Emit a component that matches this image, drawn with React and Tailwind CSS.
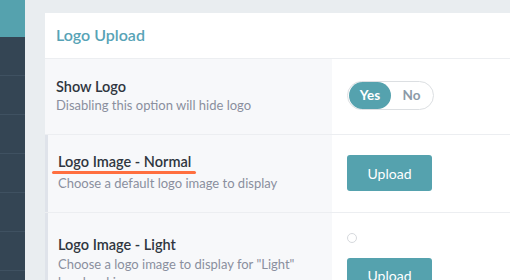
import React from 'react'

const font = { fontFamily: 'Lato, "Open Sans", sans-serif' }

export default function App() {
    return (
        <div className="flex w-[510px] h-[280px] overflow-hidden bg-[#e9edf0]" style={font}>
            {/* Sidebar */}
            <div className="w-[25px] shrink-0 flex flex-col bg-[#344554]">
                <div className="h-[37px] bg-[#55a2ae]" />
                {[0, 1, 2, 3, 4, 5].map(i => (
                    <div key={i} className="h-[39px] border-b border-[#3f5161]" />
                ))}
            </div>

            {/* Card */}
            <div className="ml-[20px] mt-[13px] w-[600px] shrink-0 bg-white">
                <div className="h-[46px] flex items-center px-[11px] pb-[1px] border-b border-[#eceef1]">
                    <h2 className="text-[16px] font-semibold text-[#57a3b6]">Logo Upload</h2>
                </div>

                {/* Show Logo */}
                <div className="flex h-[76px] border-b border-[#eceef1]">
                    <div className="w-[287px] shrink-0 bg-[#f7f8fa] flex flex-col justify-center px-[11px] pb-[4px]">
                        <p className="text-[14.5px] leading-[20px] font-semibold text-[#2f3640]">Show Logo</p>
                        <p className="text-[13px] leading-[16px] text-[#8a8f9e]">Disabling this option will hide logo</p>
                    </div>
                    <div className="flex items-center px-[15px] pb-[3px]">
                        <div className="flex items-center w-[87px] h-[29px] rounded-full border border-[#dcdfe2] p-[1px]">
                            <span className="w-[42px] h-[27px] rounded-full bg-[#55a2ae] text-white text-[13.5px] font-bold flex items-center justify-center">Yes</span>
                            <span className="flex-1 text-center text-[13.5px] font-bold text-[#8b9aa8]">No</span>
                        </div>
                    </div>
                </div>

                {/* Logo Image - Normal */}
                <div className="flex h-[78px] border-b border-[#eceef1]">
                    <div className="w-[287px] shrink-0 bg-[#f7f8fa] border-l-[3px] border-[#dfe3ea] flex flex-col justify-center pl-[10px] pr-[11px] pb-[3px]">
                        <div className="relative w-fit">
                            <p className="text-[14.5px] leading-[20px] font-semibold text-[#2f3640]">Logo Image - Normal</p>
                            <span className="absolute left-[-6px] right-[-5px] top-[19px] h-[3px] rounded-full bg-[#ff6f3f]" />
                        </div>
                        <p className="text-[13px] leading-[18px] mt-[2px] text-[#8a8f9e]">Choose a default logo image to display</p>
                    </div>
                    <div className="flex items-center px-[15px] pb-[1px]">
                        <button className="w-[85px] h-[36px] rounded-[3px] bg-[#55a2ae] text-white text-[14px]">Upload</button>
                    </div>
                </div>

                {/* Logo Image - Light */}
                <div className="flex h-[80px]">
                    <div className="w-[287px] shrink-0 bg-[#f7f8fa] border-l-[3px] border-[#dfe3ea] pl-[10px] pr-[20px] pt-[22px]">
                        <p className="text-[14.5px] leading-[20px] font-semibold text-[#2f3640]">Logo Image - Light</p>
                        <p className="text-[13px] leading-[18px] text-[#8a8f9e]">Choose a logo image to display for "Light" header skin</p>
                    </div>
                    <div className="flex flex-col px-[15px] pt-[20px]">
                        <span className="w-[10px] h-[10px] rounded-full border border-[#d6d9dd] bg-white" />
                        <button className="mt-[15px] w-[85px] h-[36px] rounded-[3px] bg-[#55a2ae] text-white text-[14px]">Upload</button>
                    </div>
                </div>
            </div>
        </div>
    )
}
